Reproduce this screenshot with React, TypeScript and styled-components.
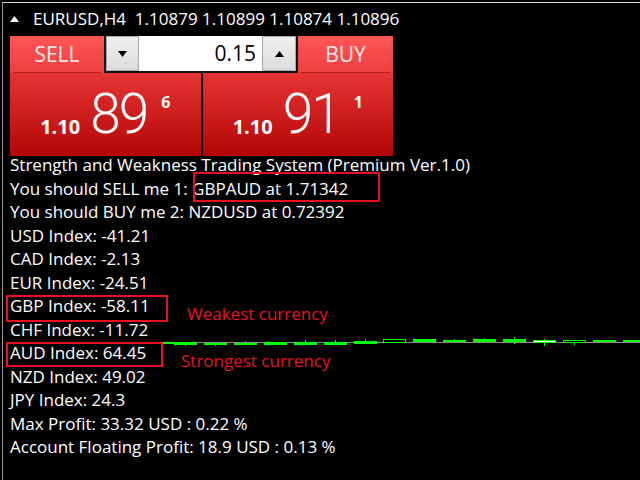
import React, { FC } from 'react';
import styled, { createGlobalStyle } from 'styled-components';

// @ data
const lines = [
  'Strength and Weakness Trading System (Premium Ver.1.0)',
  'You should SELL me 1: GBPAUD at 1.71342',
  'You should BUY me 2: NZDUSD at 0.72392',
  'USD Index: -41.21',
  'CAD Index: -2.13',
  'EUR Index: -24.51',
  'GBP Index: -58.11',
  'CHF Index: -11.72',
  'AUD Index: 64.45',
  'NZD Index: 49.02',
  'JPY Index: 24.3',
  'Max Profit: 33.32 USD : 0.22 %',
  'Account Floating Profit: 18.9 USD : 0.13 %',
];

interface Candle {
  x: number;
  top: number;
  bottom: number;
  wickTop?: number;
  wickBottom?: number;
  hollow?: boolean;
  white?: boolean;
}

// y values are relative to the chart strip (top = 330)
const candles: Candle[] = [
  { x: 154, top: 12, bottom: 14 },
  { x: 174, top: 12, bottom: 15, wickBottom: 16 },
  { x: 204, top: 13, bottom: 15, wickBottom: 16 },
  { x: 234, top: 13, bottom: 15, wickTop: 11 },
  { x: 264, top: 12, bottom: 15 },
  { x: 294, top: 12, bottom: 15, wickTop: 10 },
  { x: 324, top: 12, bottom: 15, wickTop: 10 },
  { x: 354, top: 11, bottom: 14, wickTop: 9 },
  { x: 383, top: 9.5, bottom: 12.5, hollow: true },
  { x: 413, top: 9, bottom: 12 },
  { x: 443, top: 10, bottom: 12, wickTop: 9 },
  { x: 473, top: 9, bottom: 12, wickTop: 8 },
  { x: 503, top: 9, bottom: 12, wickTop: 7, wickBottom: 14 },
  { x: 533, top: 10.5, bottom: 12.5, wickTop: 9, wickBottom: 16, hollow: true, white: true },
  { x: 563, top: 10.5, bottom: 12.5, wickBottom: 15, hollow: true },
  { x: 593, top: 10, bottom: 12 },
  { x: 623, top: 10, bottom: 12 },
];

// @ pieces
const Arrow: FC<{ up?: boolean; color?: string }> = ({ up, color = '#000' }) => (
  <svg width="9" height="6" viewBox="0 0 9 6">
    <polygon points={up ? '0,6 9,6 4.5,0' : '0,0 9,0 4.5,6'} fill={color} />
  </svg>
);

const Price: FC<{ head: string; big: string; tail: string }> = ({ head, big, tail }) => (
  <PriceBox>
    <PriceHead>{head}</PriceHead>
    <PriceBig>{big}</PriceBig>
    <PriceTail>{tail}</PriceTail>
  </PriceBox>
);

const Chart: FC = () => (
  <ChartStrip width="640" height="24" viewBox="0 0 640 24">
    <line x1="150" y1="12.5" x2="640" y2="12.5" stroke="#8a8a8a" strokeWidth="1" />
    {candles.map((c) => (
      <g key={c.x}>
        {(c.wickTop || c.wickBottom) && (
          <line
            x1={c.x + 11.5}
            x2={c.x + 11.5}
            y1={c.wickTop ?? c.top}
            y2={c.wickBottom ?? c.bottom}
            stroke="#00ff00"
            strokeWidth="1"
          />
        )}
        {c.hollow ? (
          <rect
            x={c.x + 0.5}
            y={c.top}
            width="22"
            height={c.bottom - c.top}
            fill={c.white ? '#ffffff' : '#000'}
            stroke="#00ff00"
            strokeWidth="1"
          />
        ) : (
          <rect x={c.x} y={c.top} width="23" height={c.bottom - c.top} fill="#00ff00" />
        )}
      </g>
    ))}
  </ChartStrip>
);

// @ App
const App: FC = () => (
  <>
    <GlobalStyle />
    <Screen>
      <Chart />
      <Frame>
        <Header>
          <Arrow up color="#fff" />
          <Title>EURUSD,H4  1.10879 1.10899 1.10874 1.10896</Title>
        </Header>
        <Panel>
          <TopRow>
            <SideLabel>SELL</SideLabel>
            <LotControl>
              <StepButton>
                <Arrow />
              </StepButton>
              <LotInput>0.15</LotInput>
              <StepButton>
                <Arrow up />
              </StepButton>
            </LotControl>
            <SideLabel>BUY</SideLabel>
          </TopRow>
          <BottomRow>
            <Price head="1.10" big="89" tail="6" />
            <Price head="1.10" big="91" tail="1" />
          </BottomRow>
        </Panel>
        <InfoList>
          {lines.map((l) => (
            <InfoLine key={l}>{l}</InfoLine>
          ))}
        </InfoList>
      </Frame>
      <Mark $x={193} $y={172} $w={187} $h={30} />
      <Mark $x={6} $y={295} $w={162} $h={27} />
      <Mark $x={6} $y={342} $w={157} $h={25} />
      <Note $x={187} $y={303}>Weakest currency</Note>
      <Note $x={181} $y={350}>Strongest currency</Note>
    </Screen>
  </>
);

// @ styles
const GlobalStyle = createGlobalStyle`
  html, body {
    margin: 0;
    padding: 0;
    background: #000;
  }
  body {
    font-family: 'Open Sans', 'Noto Sans', sans-serif;
  }
`;

const Screen = styled.div`
  position: relative;
  width: 640px;
  height: 480px;
  overflow: hidden;
  background: #000;
`;

const ChartStrip = styled.svg`
  position: absolute;
  left: 0;
  top: 330px;
  display: block;
`;

const Frame = styled.div`
  position: relative;
  margin: 2px 0 0 2px;
  height: 478px;
  box-sizing: border-box;
  border-top: 1px solid #d8d8d8;
  border-left: 1px solid #9c9c9c;
`;

const Header = styled.div`
  height: 33px;
  box-sizing: border-box;
  display: flex;
  align-items: flex-start;
  padding: 5px 0 0 7px;
  gap: 14px;
  & > svg {
    margin-top: 8px;
  }
`;

const Title = styled.span`
  font-size: 17px;
  line-height: 22px;
  color: #fff;
  white-space: pre;
`;

const Panel = styled.div`
  margin-left: 7px;
  width: 383px;
  display: flex;
  flex-direction: column;
`;

const TopRow = styled.div`
  display: grid;
  grid-template-columns: 94px 194px 95px;
  height: 37px;
  background: linear-gradient(#ff5656, #ee3e3e);
`;

const SideLabel = styled.div`
  position: relative;
  display: flex;
  align-items: center;
  justify-content: center;
  font-size: 21px;
  color: #ffeaea;
  padding-bottom: 2px;
  &::after {
    content: '';
    position: absolute;
    left: 3px;
    right: 3px;
    bottom: 0;
    height: 1px;
    background: rgba(140, 0, 0, 0.55);
  }
`;

const LotControl = styled.div`
  display: grid;
  grid-template-columns: 33px 1fr 34px;
  border: 2px solid #111;
  border-top: 0;
  background: #fff;
`;

const StepButton = styled.div`
  display: flex;
  align-items: center;
  justify-content: center;
  background: linear-gradient(#f0f0f0, #dcdcdc);
  border: 1px solid #a8a8a8;
`;

const LotInput = styled.div`
  font-size: 21px;
  line-height: 35px;
  color: #000;
  text-align: right;
  padding-right: 6px;
`;

const BottomRow = styled.div`
  display: grid;
  grid-template-columns: 1fr 1fr;
  gap: 2px;
  height: 83px;
  background: #000;
`;

const PriceBox = styled.div`
  display: flex;
  justify-content: center;
  align-items: flex-start;
  padding-top: 13px;
  color: #fff;
  background: linear-gradient(#e63434, #b40606);
`;

const PriceHead = styled.span`
  font-size: 20px;
  line-height: 20px;
  font-weight: 700;
  margin-top: 31px;
`;

const PriceBig = styled.span`
  font-family: Roboto, 'Open Sans', sans-serif;
  font-weight: 300;
  font-size: 55px;
  line-height: 56px;
  letter-spacing: -2px;
  margin-left: 10px;
`;

const PriceTail = styled.span`
  font-size: 16px;
  line-height: 16px;
  font-weight: 700;
  margin: 8px 0 0 14px;
`;

const InfoList = styled.div`
  margin-top: -3px;
  padding-left: 7px;
`;

const InfoLine = styled.div`
  font-size: 17px;
  line-height: 23.5px;
  color: #fff;
  white-space: pre;
`;

const Mark = styled.div<{ $x: number; $y: number; $w: number; $h: number }>`
  position: absolute;
  left: ${(p) => p.$x}px;
  top: ${(p) => p.$y}px;
  width: ${(p) => p.$w}px;
  height: ${(p) => p.$h}px;
  box-sizing: border-box;
  border: 2px solid #e8101c;
`;

const Note = styled.div<{ $x: number; $y: number }>`
  position: absolute;
  left: ${(p) => p.$x}px;
  top: ${(p) => p.$y}px;
  font-size: 17px;
  line-height: 22px;
  color: #e8141e;
`;

export default App;
